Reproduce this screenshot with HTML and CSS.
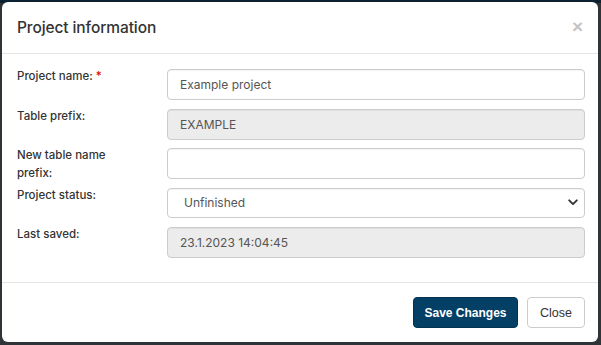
FILE: index.html
```html
<!DOCTYPE html>
<html>
<head>
<meta charset="utf-8">
<link rel="stylesheet" href="styles.css">
</head>
<body>
<div class="backdrop">
  <div class="modal">
    <div class="modal-header">
      <h1 class="modal-title">Project information</h1>
      <span class="close-x">&times;</span>
    </div>
    <div class="modal-body">
      <div class="row">
        <label class="lbl">Project name: <span class="req">*</span></label>
        <div class="field"><span class="val">Example project</span></div>
      </div>
      <div class="row">
        <label class="lbl">Table prefix:</label>
        <div class="field disabled"><span class="val">EXAMPLE</span></div>
      </div>
      <div class="row">
        <label class="lbl">New table name prefix:</label>
        <div class="field"></div>
      </div>
      <div class="row">
        <label class="lbl">Project status:</label>
        <div class="field select"><span class="val">Unfinished</span>
          <svg class="chev" width="10" height="7" viewBox="0 0 10 7"><path d="M1.2 1.3 L5 5.1 L8.8 1.3" fill="none" stroke="#333" stroke-width="1.9" stroke-linecap="round" stroke-linejoin="round"/></svg>
        </div>
      </div>
      <div class="row">
        <label class="lbl">Last saved:</label>
        <div class="field disabled"><span class="val">23.1.2023 14:04:45</span></div>
      </div>
    </div>
    <div class="modal-footer">
      <button class="btn btn-primary">Save Changes</button>
      <button class="btn btn-default">Close</button>
    </div>
  </div>
</div>
</body>
</html>
```
FILE: styles.css
```css
html, body {
  margin: 0;
  padding: 0;
  width: 601px;
  height: 345px;
  overflow: hidden;
}
body {
  background: #2f3438;
  font-family: Inter, "Noto Sans", sans-serif;
}
.backdrop {
  width: 601px;
  height: 345px;
  box-sizing: border-box;
  padding: 2px 3px 3px 2px;
  background: linear-gradient(to bottom, #0c2233 0, #0c2233 3px, #2f3438 3px);
}
.modal {
  background: #fff;
  border-radius: 6px;
  height: 340px;
  display: flex;
  flex-direction: column;
  overflow: hidden;
}
.modal-header {
  height: 51px;
  border-bottom: 1px solid #e5e5e5;
  display: flex;
  align-items: center;
  justify-content: space-between;
  padding: 0 15px;
  flex: none;
}
.modal-title {
  margin: 0;
  font-size: 15.5px;
  font-weight: 500;
  color: #333;
  letter-spacing: -0.1px;
}
.close-x {
  font-family: "Liberation Sans", Arial, sans-serif;
  font-size: 19px;
  color: #c4c4c4;
  font-weight: bold;
  margin-top: -2px;
}
.modal-body {
  padding: 15px 13px 0 15px;
  flex: 1;
  border-bottom: 1px solid #e5e5e5;
}
.row {
  display: flex;
  align-items: flex-start;
  height: 31px;
  margin-bottom: 8.5px;
}
.lbl {
  width: 150px;
  flex: none;
  font-size: 11.5px;
  font-weight: 500;
  color: #333;
  line-height: 18px;
  margin-top: -2px;
  padding-right: 40px;
  box-sizing: border-box;
}
.req {
  color: #d00;
}
.field {
  flex: 1;
  height: 31px;
  box-sizing: border-box;
  border: 1px solid #cccccc;
  border-radius: 4px;
  background: #fff;
  display: flex;
  align-items: center;
  padding: 0 12px;
  font-size: 12px;
  color: #555;
  box-shadow: inset 0 1px 1px rgba(0,0,0,0.05);
}
.field.disabled {
  background: #ececec;
}
.field.select {
  height: 30px;
  padding-left: 16px;
  justify-content: space-between;
  padding-right: 6px;
}
.chev {
  display: block;
}
.modal-footer {
  height: 59px;
  flex: none;
  display: flex;
  justify-content: flex-end;
  align-items: center;
  padding: 0 13px 0 0;
  gap: 9px;
}
.btn {
  font-family: "Liberation Sans", Arial, sans-serif;
  font-size: 12.5px;
  height: 31px;
  border-radius: 4px;
  padding: 0;
  white-space: nowrap;
  cursor: pointer;
}
.btn-primary {
  background: #043f66;
  border: 1px solid #03344f;
  color: #fff;
  font-weight: bold;
  font-size: 12px;
  width: 105px;
}
.btn-default {
  background: #fff;
  border: 1px solid #ccc;
  color: #333;
  width: 58px;
}
```
